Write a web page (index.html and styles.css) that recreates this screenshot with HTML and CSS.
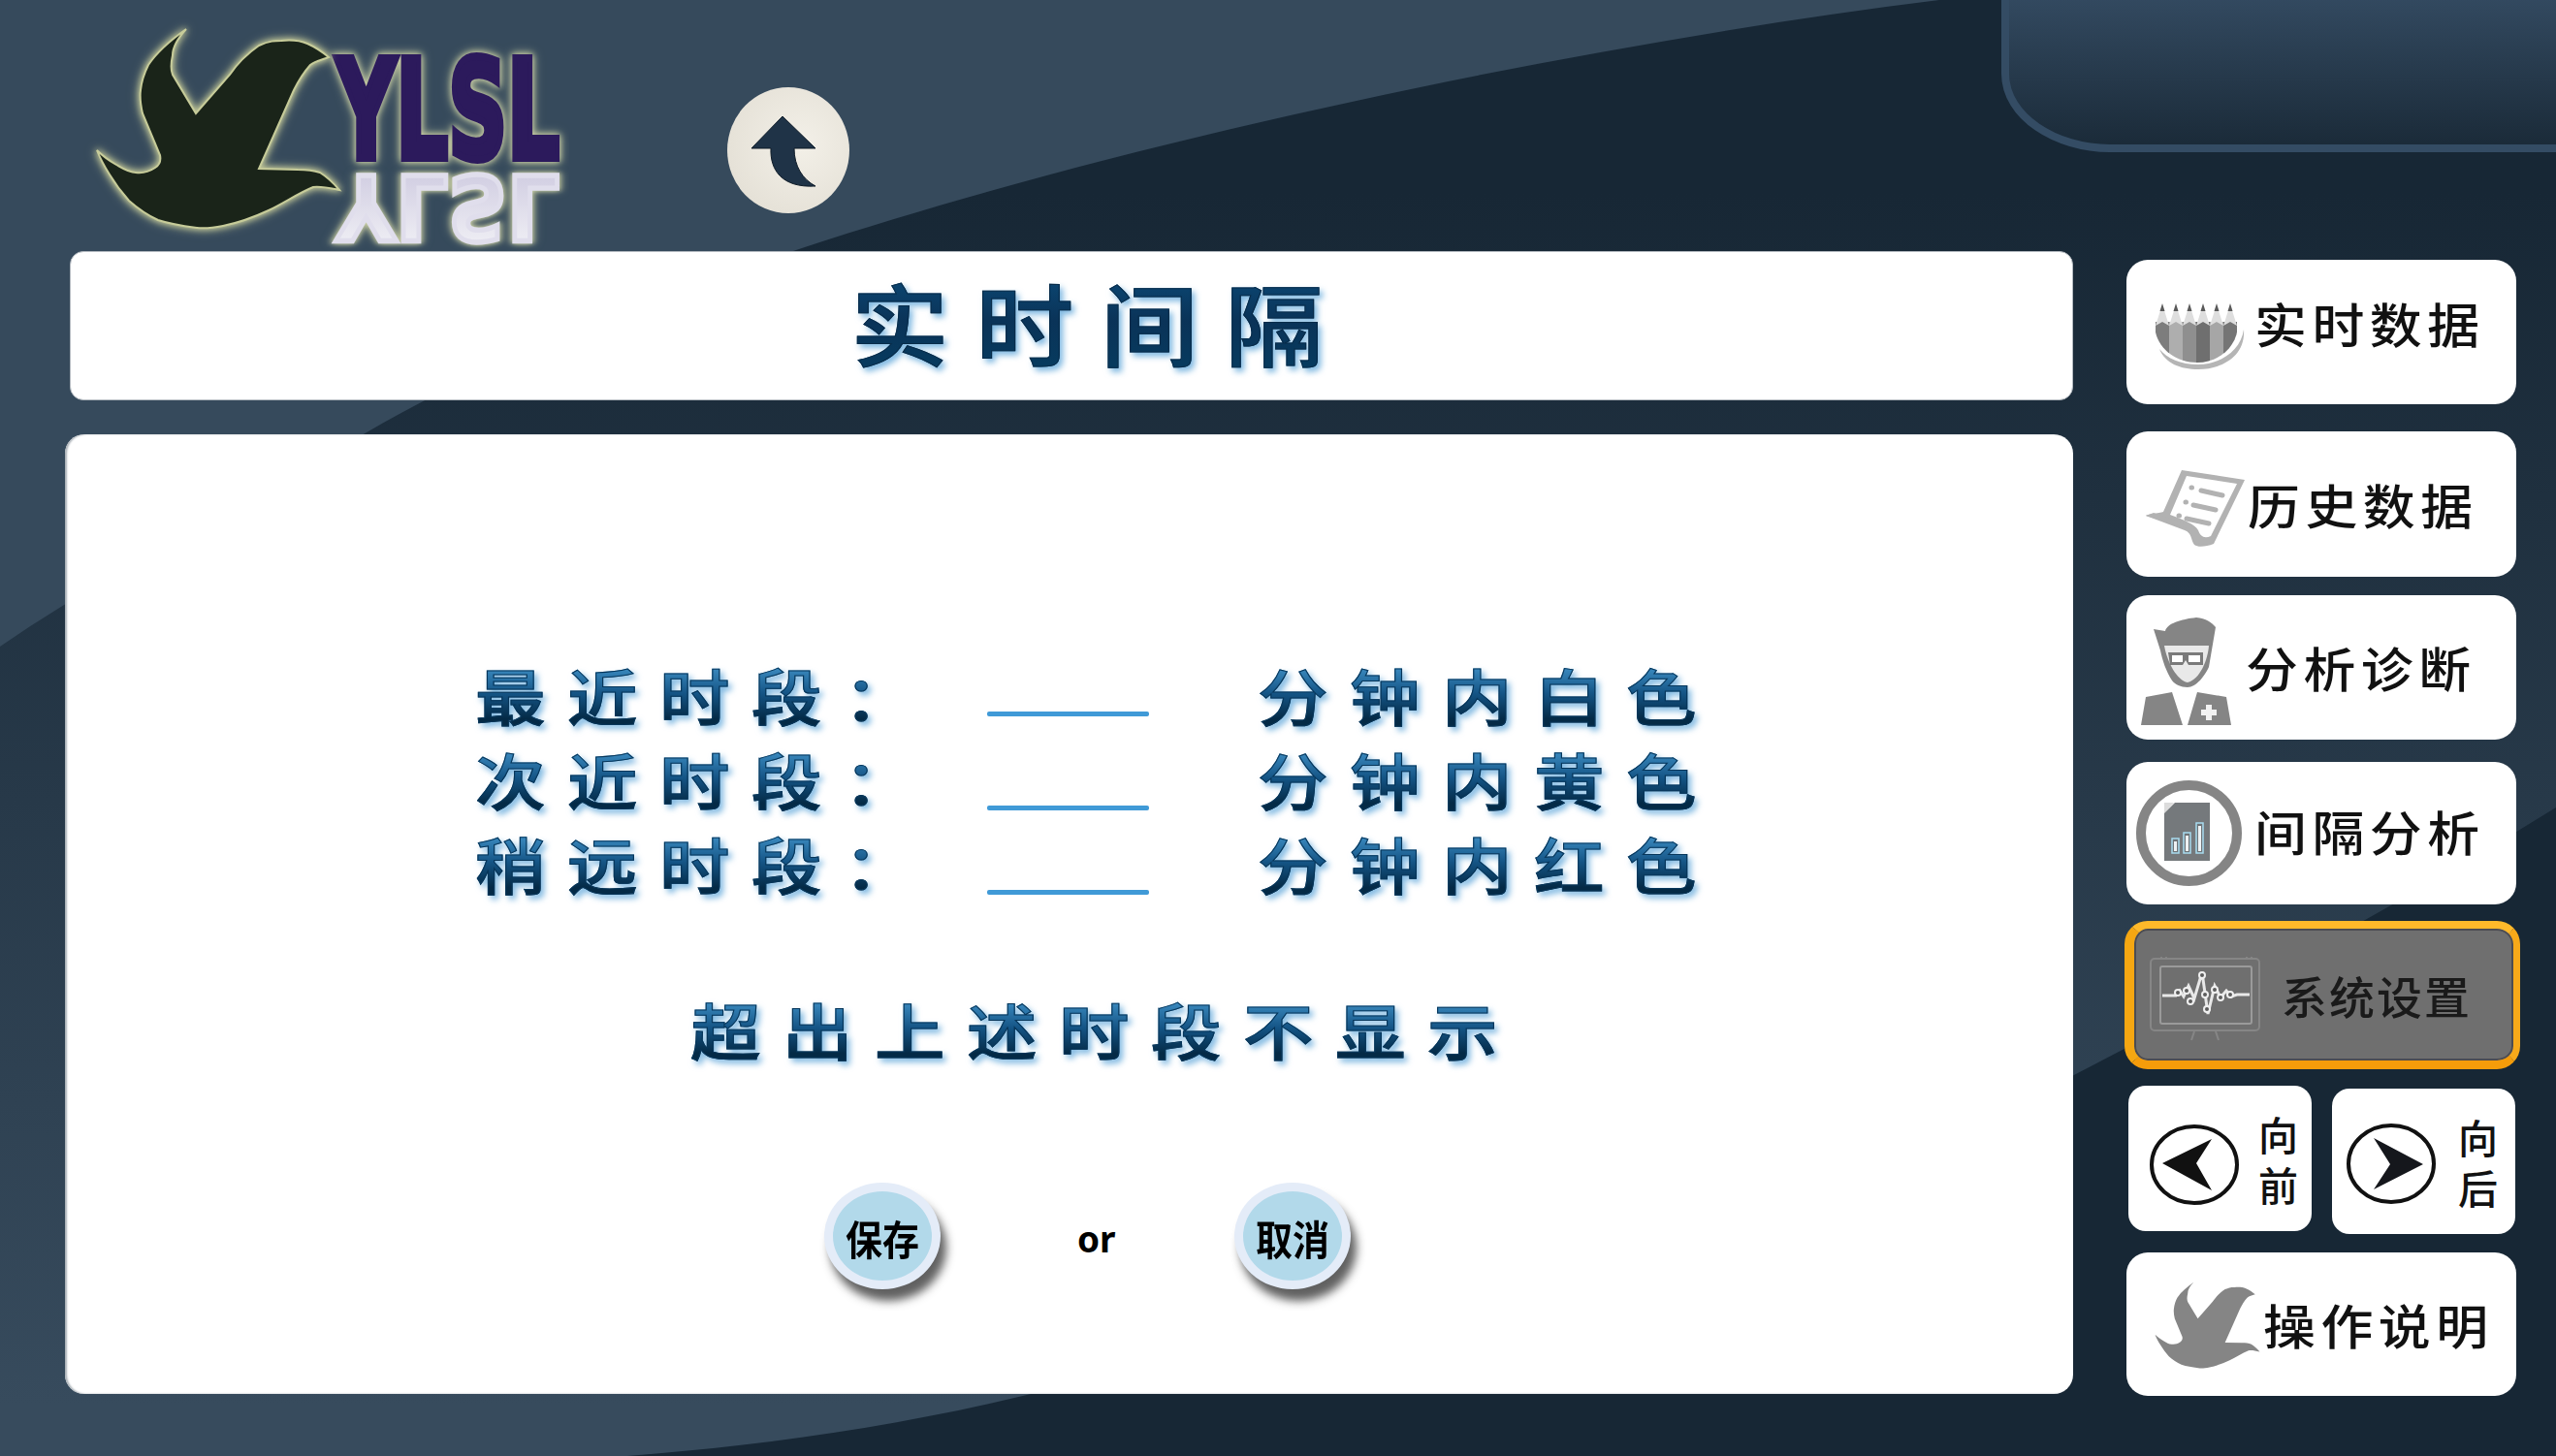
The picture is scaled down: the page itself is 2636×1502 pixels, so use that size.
FILE: index.html
```html
<!DOCTYPE html>
<html lang="zh-CN">
<head>
<meta charset="utf-8">
<title>实时间隔</title>
<link rel="stylesheet" href="styles.css">
</head>
<body>
<svg class="backdrop" viewBox="0 0 2636 1502" aria-hidden="true">
  <defs>
    <linearGradient id="bgBand" x1="0" y1="200" x2="0" y2="1450" gradientUnits="userSpaceOnUse">
      <stop offset="0" stop-color="#172735"/><stop offset="1" stop-color="#374b5d"/>
    </linearGradient>
    <linearGradient id="cornerFill" x1="0" y1="0" x2="0" y2="1">
      <stop offset="0" stop-color="#344b62"/><stop offset="1" stop-color="#1a2a38"/>
    </linearGradient>
    <symbol id="bird" viewBox="95 26 260 213">
      <path d="M192 30 C183 40 178 48 178 57 C176 66 176 72 178 77 L202 117 L237 77 C247 62 257 54 267 47 C278 42 284 42 290 42 C300 41 310 42 317 45 C326 49 333 54 339 59 C331 62 325 63 320 67 C313 75 308 83 303 93 L267 174 L307 175 C316 175 324 176 330 178 C338 183 345 190 350 196 C340 194 332 192 323 193 C308 199 292 210 277 217 C262 224 245 230 230 233 C220 235 212 236 203 235 C188 233 175 231 163 227 C152 222 142 215 133 207 C125 198 119 190 113 180 C108 172 103 163 100 155 C106 161 113 166 120 170 C127 174 133 178 140 178 C147 179 154 177 160 173 C165 170 166 165 165 160 L147 117 C145 108 144 100 145 93 C146 83 149 75 153 67 C163 52 178 40 192 30 Z"/>
    </symbol>
  </defs>
  <rect width="2636" height="1502" fill="url(#bgBand)"/>
  <path d="M647 1502 C800 1490 930 1470 1059 1439 C1450 1345 1850 1260 2137 1110 C2330 1010 2480 930 2636 833 V1502 Z" fill="#172735"/>
  <path d="M0 0 H2000 C1600 50 1150 150 830 255 C650 315 500 375 380 445 C250 520 120 585 0 667 Z" fill="#364a5c"/>
  <path d="M2068 -10 V76 C2068 120 2120 153 2176 153 H2646 V-10 Z" fill="url(#cornerFill)" stroke="#344c64" stroke-width="8"/>
</svg>

<div class="page">
  <main class="left">
    <header class="top">
      <svg class="logo" viewBox="67 0 520 259" role="img" aria-label="YLSL">
        <defs>
          <linearGradient id="mirrorFill" x1="0" y1="0" x2="0" y2="1">
            <stop offset="0" stop-color="#f5f5f8"/><stop offset="1" stop-color="#c9c5dd"/>
          </linearGradient>
        </defs>
        <text class="logo-word" x="347" y="163" textLength="230" lengthAdjust="spacingAndGlyphs">YLSL</text>
        <text class="logo-flip" x="347" y="-275" textLength="230" lengthAdjust="spacingAndGlyphs" transform="scale(1,-0.66)">YLSL</text>
        <use class="logo-bird" href="#bird" x="95" y="26" width="260" height="213"/>
      </svg>
      <button class="up" aria-label="上一级">
        <svg viewBox="0 0 126 130"><path d="M57 30 L25 63 L45 63 C44 85 56 104 91 102 C78 95 69 82 69 63 L91 63 Z" fill="#1f3347" stroke="#0f1c28" stroke-width="1"/></svg>
      </button>
    </header>

    <section class="title-card">
      <h1 class="title bevel-dark">实时间隔</h1>
    </section>

    <section class="panel">
      <div class="rows">
        <div class="row">
          <span class="label bevel">最近时段：</span><span class="blank"></span><span class="label bevel">分钟内白色</span>
        </div>
        <div class="row">
          <span class="label bevel">次近时段：</span><span class="blank"></span><span class="label bevel">分钟内黄色</span>
        </div>
        <div class="row">
          <span class="label bevel">稍远时段：</span><span class="blank"></span><span class="label bevel">分钟内红色</span>
        </div>
      </div>
      <p class="note bevel">超出上述时段不显示</p>
      <div class="actions">
        <button class="round"><span>保存</span></button>
        <span class="or">or</span>
        <button class="round"><span>取消</span></button>
      </div>
    </section>
  </main>

  <nav class="nav">
    <a class="item n1">
      <svg class="ico ico-pencils" viewBox="0 0 92 70">
        <defs><clipPath id="bowlClip"><path d="M-1 0 H85 V22 C85 45 66 62 43 62 C19 62 -1 45 -1 22 Z"/></clipPath></defs>
        <path d="M4 48 C10 63 26 69 44 69 C68 69 93 56 91 28 C88 50 66 64 44 64 C26 64 12 58 4 48 Z" fill="#b5b5b5"/>
        <g clip-path="url(#bowlClip)">
          <rect x="0" y="20" width="14" height="44" fill="#7d7d7d"/>
          <rect x="14" y="20" width="14" height="44" fill="#aeaeae"/>
          <rect x="28" y="20" width="14" height="44" fill="#8f8f8f"/>
          <rect x="42" y="20" width="14" height="44" fill="#6f6f6f"/>
          <rect x="56" y="20" width="14" height="44" fill="#a6a6a6"/>
          <rect x="70" y="20" width="14" height="44" fill="#757575"/>
          <path d="M0 24 L7 2 L14 24 L7 20Z M14 24 L21 2 L28 24 L21 20Z M28 24 L35 2 L42 24 L35 20Z M42 24 L49 2 L56 24 L49 20Z M56 24 L63 2 L70 24 L63 20Z M70 24 L77 2 L84 24 L77 20Z" fill="#dedede"/>
          <path d="M4.500 9 L7 1 L9.500 9Z M18.500 9 L21 1 L23.500 9Z M32.500 9 L35 1 L37.500 9Z M46.500 9 L49 1 L51.500 9Z M60.500 9 L63 1 L65.500 9Z M74.500 9 L77 1 L79.500 9Z" fill="#5a5a5a"/>
        </g>
      </svg>
      <span class="txt">实时数据</span>
    </a>
    <a class="item n2">
      <svg class="ico ico-scroll" viewBox="0 0 103 79">
        <path d="M37 0 L102 10 L70 76 C62 79 54 80 50 77 C46 72 48 65 40 62 L0 47 C0 46 14 44 18 43 Z" fill="#b2b2b2"/>
        <path d="M42 6 L94 14 L67 68 C60 71 56 68 54 62 C50 55 40 52 25 46 Z" fill="#fff"/>
        <path d="M0 47 L42 60 C48 62 47 70 51 75 L62 76 C58 70 54 62 44 56 L8 44 Z" fill="#b2b2b2"/>
        <g stroke="#b2b2b2" stroke-width="5" stroke-linecap="round" fill="none">
          <path d="M57 21 L79 26 M49 36 L72 41 M42 50 L65 55"/>
          <path d="M47 18 h.5 M41 33 h.5 M34 47 h.5"/>
        </g>
      </svg>
      <span class="txt">历史数据</span>
    </a>
    <a class="item n3">
      <svg class="ico ico-doctor" viewBox="0 0 95 113">
        <path d="M58 2 C68 3 74 7 78 12 L71 53 C67 62 58 74 49 74 C42 74 36 71 33 67 C27 58 23 46 21 36 L14 14 L26 16 C28 8 42 4 58 2 Z" fill="#858585"/>
        <path d="M25 31 H71 C70 45 62 66 49 69 C38 67 28 48 25 31 Z" fill="#e9e9e9"/>
        <path d="M29 38 H65 V51 H50 L47 46 L44 51 H31 Z" fill="#7a7a7a"/>
        <path d="M33 41 H44 V48 H33 Z M50 41 H62 V48 H50 Z" fill="#fff"/>
        <path d="M1 113 L6 84 L33 79 L44 113 Z M49 113 L59 79 L89 84 L94 113 Z" fill="#858585"/>
        <path d="M68 92 h6 v5 h5 v6 h-5 v5 h-6 v-5 h-5 v-6 h5 Z" fill="#f2f2f2"/>
      </svg>
      <span class="txt">分析诊断</span>
    </a>
    <a class="item n4">
      <svg class="ico ico-chart" viewBox="0 0 109 109">
        <ellipse cx="54.500" cy="54.500" rx="49.500" ry="49.500" fill="none" stroke="#858585" stroke-width="10"/>
        <path d="M29 23 L39 23 L29 34 Z" fill="#dcdcdc"/>
        <path d="M40 23 H76 V83 H29 V34 Z" fill="#75797c"/>
        <g fill="#6f7478" stroke="#a8dcf0" stroke-width="1.500">
          <rect x="37" y="60" width="7" height="15"/><rect x="49" y="54" width="7" height="21"/><rect x="62" y="44" width="7" height="31"/>
        </g>
        <g fill="#eef2f4"><rect x="39" y="63" width="3" height="10"/><rect x="51" y="57" width="3" height="16"/><rect x="64" y="47" width="3" height="26"/></g>
      </svg>
      <span class="txt">间隔分析</span>
    </a>
    <a class="item n5">
      <svg class="ico ico-monitor" viewBox="0 0 114 90">
        <g fill="none" stroke="#868686" stroke-width="2">
          <rect x="1" y="3" width="112" height="74" rx="4"/>
          <rect x="11" y="11" width="94" height="59" rx="2" stroke="#9a9a9a"/>
          <path d="M46 78 L43 87 M68 78 L71 87"/>
          <path d="M12 1 V4 M17 1 V4 M100 1 V4 M105 1 V4"/>
        </g>
        <path d="M13 41 H27 L31 36 L35 42 L40 31 L46 44 L54 17 L60 60 L67 31 L73 43 L79 36 L84 42 L90 40 H103" fill="none" stroke="#e8e8e8" stroke-width="3"/>
        <g fill="#5c5c5c" stroke="#f0f0f0" stroke-width="2">
          <circle cx="29" cy="38" r="3"/><circle cx="38" cy="36" r="3"/><circle cx="42" cy="47" r="3"/><circle cx="54" cy="20" r="3"/><circle cx="57" cy="40" r="3"/><circle cx="59" cy="55" r="3"/><circle cx="67" cy="35" r="3"/><circle cx="73" cy="43" r="3"/><circle cx="83" cy="40" r="3"/>
        </g>
      </svg>
      <span class="txt txt-active">系统设置</span>
    </a>
    <div class="pair">
      <a class="item step prev">
        <svg class="ico ico-arrow" viewBox="0 0 92 83">
          <ellipse cx="46" cy="41.500" rx="44" ry="39.500" fill="#fff" stroke="#111" stroke-width="4"/>
          <path d="M13 40 L64 15 L48 40 L64 68 Z" fill="#111"/>
        </svg>
        <span class="stack"><span>向</span><span>前</span></span>
      </a>
      <a class="item step next">
        <svg class="ico ico-arrow" viewBox="0 0 92 83">
          <ellipse cx="46" cy="41.500" rx="44" ry="39.500" fill="#fff" stroke="#111" stroke-width="4"/>
          <path d="M28 15 L79 42 L28 68 L45 42 Z" fill="#15171c"/>
        </svg>
        <span class="stack"><span>向</span><span>后</span></span>
      </a>
    </div>
    <a class="item n7">
      <svg class="ico ico-bird" viewBox="0 0 117 92"><use href="#bird" width="117" height="92" fill="#858585" preserveAspectRatio="none"/></svg>
      <span class="txt">操作说明</span>
    </a>
  </nav>
</div>
</body>
</html>
```

FILE: styles.css
```css
html, body {
  margin: 0;
  padding: 0;
}

body {
  width: 2636px;
  height: 1502px;
  overflow: hidden;
  position: relative;
  background: #172735;
  font-family: "Noto Sans CJK SC", "Noto Sans", sans-serif;
}

.backdrop {
  position: absolute;
  left: 0;
  top: 0;
  width: 2636px;
  height: 1502px;
}

.page {
  position: relative;
  display: flex;
  padding-left: 67px;
}

.left {
  width: 2071px;
  display: flex;
  flex-direction: column;
}

/* header */
.top {
  height: 259px;
  display: flex;
  align-items: flex-start;
}

.logo {
  width: 520px;
  height: 259px;
  flex: none;
}

.logo text {
  font-family: "DejaVu Sans", sans-serif;
  font-weight: 700;
  font-size: 140px;
}

.logo-word {
  fill: #2c1a5c;
  stroke: #2c1a5c;
  stroke-width: 8px;
  filter: drop-shadow(0 0 3px #d3d7a8) drop-shadow(0 0 5px rgba(211, 215, 168, 0.7));
}

.logo-flip {
  fill: url(#mirrorFill);
  stroke: #e0deec;
  stroke-width: 8px;
  filter: drop-shadow(0 0 3px #d3d7a8) drop-shadow(0 0 5px rgba(211, 215, 168, 0.6));
}

.logo-bird {
  fill: #1a2419;
  stroke: #c7cc9a;
  stroke-width: 2px;
  filter: drop-shadow(0 0 3px #c7cc9a) drop-shadow(0 0 5px rgba(199, 204, 154, 0.7));
}

.up {
  width: 126px;
  height: 130px;
  margin: 90px 0 0 163px;
  padding: 0;
  border: 0;
  border-radius: 50%;
  background: radial-gradient(circle at 60% 45%, #f3f0e8 0%, #e6e2d8 70%, #dedad0 100%);
  flex: none;
}

.up svg {
  display: block;
  width: 126px;
  height: 130px;
}

/* title */
.title-card {
  height: 152px;
  margin-left: 5px;
  background: #fff;
  border: 1px solid #b4bac0;
  border-radius: 14px;
  display: flex;
  align-items: center;
  justify-content: center;
}

.title {
  margin: 0;
  padding: 0 0 0 54px;
  font-size: 92px;
  font-weight: 500;
  line-height: 110px;
  letter-spacing: 25px;
  transform: scaleX(1.1);
  position: relative;
  top: -5px;
}

.bevel-dark {
  background: linear-gradient(180deg, #0b4672 10%, #0a3358 50%, #073a5e 90%);
  -webkit-background-clip: text;
  background-clip: text;
  color: transparent;
  -webkit-text-stroke: 1px #082c4a;
  filter: drop-shadow(3px 4px 3px rgba(84, 160, 215, 0.75));
}

.bevel {
  background: linear-gradient(180deg, #3f90c6 16%, #145485 50%, #042a46 80%);
  -webkit-background-clip: text;
  background-clip: text;
  color: transparent;
  -webkit-text-stroke: 1px #07365a;
  filter: drop-shadow(3px 4px 3px rgba(84, 160, 215, 0.75));
}

/* main panel */
.panel {
  height: 990px;
  margin-top: 35px;
  box-sizing: border-box;
  background: #fff;
  border-radius: 20px;
  box-shadow: inset 2px 0 2px #a9b0b6;
  padding-top: 224px;
  display: flex;
  flex-direction: column;
}

.rows {
  padding-left: 423px;
}

.row {
  height: 87px;
  display: flex;
  align-items: stretch;
}

.label {
  width: 526px;
  font-size: 63px;
  font-weight: 500;
  line-height: 87px;
  letter-spacing: 19.600px;
  white-space: nowrap;
  transform: scaleX(1.15);
  transform-origin: 0 50%;
  flex: none;
}

.blank {
  width: 167px;
  height: 5px;
  align-self: flex-end;
  margin: 0 0 10px 2px;
  border-radius: 2px;
  background: #409ad7;
  flex: none;
}

.row:first-child .blank {
  margin-bottom: 20px;
}

.blank + .label {
  margin-left: 112px;
}

.note {
  margin: 84px 0 0 645px;
  font-size: 63px;
  font-weight: 500;
  line-height: 87px;
  letter-spacing: 19.600px;
  white-space: nowrap;
  width: 760px;
  transform: scaleX(1.15);
  transform-origin: 0 50%;
}

.actions {
  margin: 116px 0 0 783px;
  display: flex;
  align-items: center;
}

.round {
  width: 120px;
  height: 110px;
  padding: 4px 0 0;
  border: 9px solid #e4ecf8;
  border-radius: 50%;
  background: #b2d9ea;
  box-shadow: 6px 12px 10px rgba(30, 30, 30, 0.7);
  color: #000;
  font-family: inherit;
  font-size: 38px;
  font-weight: 700;
  line-height: 1;
  flex: none;
  display: flex;
  align-items: center;
  justify-content: center;
}

.round span {
  white-space: nowrap;
  transform: scaleY(1.1);
}

.or {
  width: 39px;
  margin: 6px 123px 0 141px;
  font-family: "Noto Sans", sans-serif;
  font-size: 37px;
  font-weight: 700;
  line-height: 40px;
  color: #000;
  flex: none;
}

/* right navigation */
.nav {
  width: 408px;
  margin-left: 53px;
  padding-top: 268px;
  display: flex;
  flex-direction: column;
}

.item {
  display: flex;
  align-items: center;
  background: #fff;
  border-radius: 22px;
  box-sizing: border-box;
  margin-left: 2px;
  width: 402px;
  flex: none;
}

.ico {
  display: block;
  flex: none;
}

.txt {
  font-size: 49px;
  font-weight: 500;
  line-height: 60px;
  letter-spacing: 5px;
  color: #111;
  white-space: nowrap;
  transform: scaleX(1.1);
  transform-origin: 0 50%;
}

.n1 {
  height: 149px;
  padding-left: 30px;
}

.ico-pencils {
  width: 92px;
  height: 70px;
  margin: 8px 10px 0 0;
}

.n1 .txt {
  margin-bottom: 19px;
}

.n2 {
  height: 150px;
  margin-top: 28px;
  padding-left: 20px;
}

.ico-scroll {
  width: 103px;
  height: 79px;
  margin: 8px 2px 0 0;
}

.n3 {
  height: 149px;
  margin-top: 19px;
  padding-left: 14px;
}

.ico-doctor {
  width: 95px;
  height: 113px;
  margin: 6px 14px 0 0;
}

.n3 .txt {
  margin-bottom: 2px;
}

.n4 {
  height: 147px;
  margin-top: 23px;
  padding-left: 10px;
}

.ico-chart {
  width: 109px;
  height: 109px;
  margin-right: 13px;
}

.n4 .txt {
  margin-bottom: 6px;
}

.n5 {
  width: 408px;
  height: 153px;
  margin: 17px 0 0;
  padding-left: 16px;
  background: #6f6f6f;
  border-radius: 24px;
  border: solid;
  border-width: 8px 7px 9px 10px;
  border-color: #ffb92a #f7a91a #f59c0a #f5a712;
  box-shadow: inset 0 0 0 2px #4c4c52;
}

.ico-monitor {
  width: 114px;
  height: 90px;
  margin: 10px 22px 0 0;
}

.txt-active {
  font-size: 46px;
  letter-spacing: 2px;
  transform: scaleX(1.02);
  color: #1a1a1a;
}

.pair {
  height: 153px;
  margin-top: 17px;
  display: flex;
  align-items: flex-start;
}

.step {
  width: 189px;
  height: 150px;
  border-radius: 18px;
  padding-left: 22px;
}

.prev {
  margin-left: 4px;
}

.next {
  margin: 3px 0 0 21px;
  padding-left: 15px;
}

.ico-arrow {
  width: 92px;
  height: 83px;
}

.prev .ico-arrow {
  margin: 13px 20px 0 0;
}

.next .ico-arrow {
  margin: 4px 23px 0 0;
}

.stack {
  display: flex;
  flex-direction: column;
  font-size: 41px;
  font-weight: 500;
  line-height: 52px;
  color: #111;
}

.n7 {
  height: 148px;
  margin-top: 19px;
  padding-left: 25px;
}

.ico-bird {
  width: 117px;
  height: 92px;
  margin: 2px -1px 0 0;
}
```
